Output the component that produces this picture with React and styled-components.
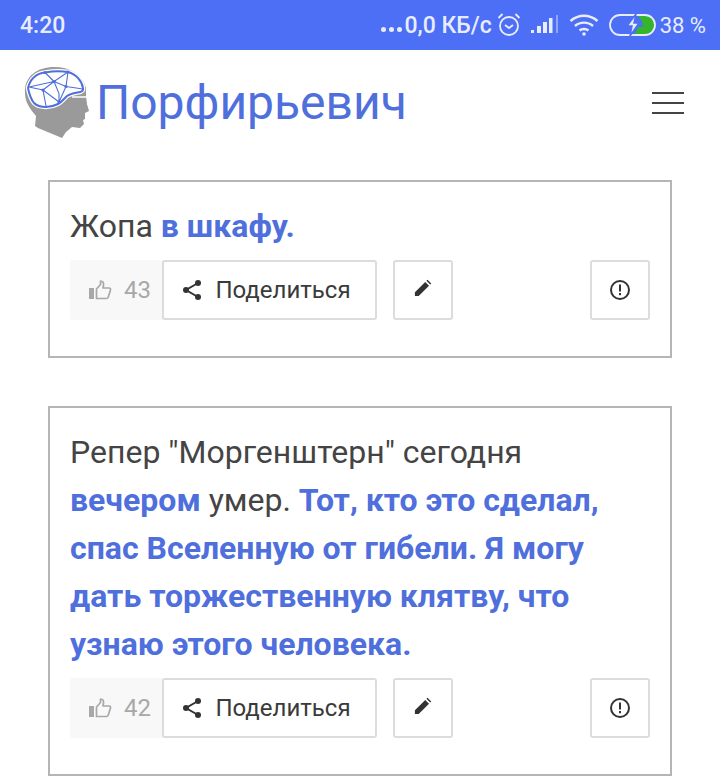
import styled, { createGlobalStyle } from "styled-components";

const Global = createGlobalStyle`
  html, body {
    margin: 0;
    padding: 0;
    background: #fff;
  }
  body {
    font-family: "Roboto", "Liberation Sans", sans-serif;
    width: 720px;
    height: 784px;
    overflow: hidden;
  }
`;

const Page = styled.div`
  width: 720px;
  height: 784px;
  overflow: hidden;
`;

const StatusBar = styled.div`
  height: 50px;
  background: #4d6ff5;
  color: #e8edfe;
  display: flex;
  align-items: center;
  justify-content: space-between;
  padding: 0 14px 0 20px;
  box-sizing: border-box;
`;

const Time = styled.span`
  font-size: 23px;
  font-weight: 500;
`;

const StatusRight = styled.div`
  display: flex;
  align-items: center;
`;

const Dots = styled.span`
  display: flex;
  gap: 3px;
  margin-right: 2px;
  align-self: flex-end;
  padding-bottom: 7px;
  & > i {
    display: block;
    width: 5px;
    height: 5px;
    border-radius: 50%;
    background: #e8edfe;
  }
`;

const Speed = styled.span`
  font-size: 23px;
  font-weight: 500;
  margin-right: 5px;
`;

const Percent = styled.span`
  font-size: 22px;
  margin-left: 4px;
`;

const StatusIcon = styled.svg`
  display: block;
  margin-left: ${(props) => props.$gap || 0}px;
`;

const Header = styled.header`
  height: 105px;
  display: flex;
  align-items: center;
  justify-content: space-between;
  padding: 0 36px 0 22px;
  box-sizing: border-box;
`;

const Brand = styled.div`
  display: flex;
  align-items: center;
`;

const BrandName = styled.span`
  font-size: 48px;
  color: #4f6fdc;
  margin-left: 6px;
`;

const Burger = styled.div`
  width: 32px;
  display: flex;
  flex-direction: column;
  gap: 8px;
  & > i {
    display: block;
    height: 2px;
    background: #444;
  }
`;

const Feed = styled.main`
  padding: 25px 48px 0;
  display: flex;
  flex-direction: column;
  gap: 48px;
`;

const Card = styled.article`
  border: 2px solid #b5b5b5;
  padding: 20px 20px 36px;
`;

const CardText = styled.p`
  margin: 0 0 10px;
  font-size: 32px;
  line-height: 48px;
  color: #444;
`;

const Accent = styled.b`
  color: #4f6fdc;
  font-weight: 700;
`;

const Actions = styled.div`
  display: flex;
  align-items: stretch;
  height: 60px;
`;

const Likes = styled.div`
  width: 94px;
  margin-right: -2px;
  background: #f8f8f8;
  border-radius: 3px 0 0 3px;
  display: flex;
  align-items: center;
  padding-left: 19px;
  box-sizing: border-box;
  color: #a8a8a8;
  font-size: 24px;
  gap: 12px;
`;

const Button = styled.button`
  font-family: inherit;
  background: #fff;
  border: 2px solid #dcdcdc;
  border-radius: 3px;
  color: #3a3a3a;
  font-size: 24px;
  height: 60px;
  padding: 0 ${(props) => props.$endPad || 0}px 0 0;
  width: ${(props) => props.$width}px;
  margin-left: ${(props) => props.$gap || 0}px;
  display: flex;
  align-items: center;
  justify-content: center;
  gap: 13px;
`;

const Spacer = styled.div`
  flex: 1;
`;

const ThumbIcon = () => (
  <svg width="23" height="20" viewBox="0 0 23 20" fill="none">
    <rect x="0" y="8" width="5" height="11" fill="#a8a8a8" />
    <path d="M7.500 9l4-4.500V1c2.500 0 3.300 2 3 4l-.5 3h6c1.200 0 1.800.9 1.500 1.900l-2.300 7.400c-.3.8-.9 1.200-1.600 1.200H7.500z" stroke="#a8a8a8" strokeWidth="1.700" strokeLinejoin="round" />
  </svg>
);

const ShareIcon = () => (
  <svg width="20" height="22" viewBox="0 0 20 22" fill="none">
    <path d="M16 4L4 11l12 7" stroke="#333" strokeWidth="2" />
    <circle cx="16" cy="4" r="3" fill="#333" />
    <circle cx="4" cy="11" r="3" fill="#333" />
    <circle cx="16" cy="18" r="3" fill="#333" />
  </svg>
);

const PencilIcon = () => (
  <svg width="18" height="18" viewBox="0 0 20 20" style={{ marginTop: -4 }}>
    <path d="M1 19v-4.200L12.500 3.300l4.200 4.200L5.200 19z M13.800 2L15 .8l4.200 4.200L18 6.200z" fill="#333" />
  </svg>
);

const AlertIcon = () => (
  <svg width="22" height="22" viewBox="0 0 22 22" fill="none">
    <circle cx="11" cy="11" r="9" stroke="#333" strokeWidth="2" />
    <rect x="10" y="5.500" width="2" height="7" fill="#333" />
    <rect x="10" y="14" width="2" height="2.200" fill="#333" />
  </svg>
);

const brainOutline =
  "M6 22C8 13 15 7 23 6.500c8-1.500 17-1.500 23-.5 8 2 14 9 15 16 .5 2-1 3.500-3 4-5 1-10 1.500-13 4-3 2.500-5 6-9 8-4 2-8 3-12 3-5 0-9-1-12-4C8 32 7 27 6 22z";

const Logo = () => (
  <svg width="68" height="74" viewBox="0 0 68 74">
    <path d="M3 27C2 10 16 1 32 1c16 0 28 7 32 21v8l1 8 2 7-4 2v6l-2 1 1 4-4 4-8-1-6 5-4 6-24-10-3-2 1-10C8 43 3 36 3 27z" fill="#9a9a9a" />
    <path d={brainOutline} fill="#fff" stroke="#fff" strokeWidth="4.500" />
    <path d={brainOutline} fill="#fff" stroke="#4f6fdc" strokeWidth="2" />
    <path d="M23 6.500l9 9M46 6L32 15.500M46 6l-2 14.500M32 15.500l12 5M32 15.500L21 24M7 21l25-5.500M7 21l14 3M21 24l16 12M44 20.500L37 36M44 20.500L61 23M21 24l3 16M32 15.500l5 12v8.500" stroke="#4f6fdc" strokeWidth="1.100" fill="none" />
    <g fill="#4f6fdc">
      <circle cx="23" cy="6.500" r="1.600" />
      <circle cx="46" cy="6" r="1.600" />
      <circle cx="32" cy="15.500" r="1.600" />
      <circle cx="44" cy="20.500" r="1.600" />
      <circle cx="21" cy="24" r="1.600" />
      <circle cx="37" cy="36" r="1.600" />
    </g>
    <path d="M50 31h16v8" stroke="#fff" strokeWidth="1.300" fill="none" />
  </svg>
);

const Alarm = () => (
  <StatusIcon width="24" height="26" viewBox="0 0 24 26" fill="none" stroke="#e8edfe">
    <circle cx="12" cy="14" r="9" strokeWidth="1.800" />
    <path d="M8 13l4 3 4-3M1.500 6l4-4M22.500 6l-4-4" strokeWidth="1.800" />
  </StatusIcon>
);

const Signal = () => (
  <StatusIcon $gap={10} width="28" height="22" viewBox="0 0 28 22">
    <rect x="0" y="16" width="3" height="3" fill="#e8edfe" />
    <rect x="6" y="12" width="4" height="7" fill="#e8edfe" />
    <rect x="12" y="8" width="4" height="11" fill="#e8edfe" />
    <rect x="18" y="4" width="3.500" height="15" fill="#e8edfe" />
    <rect x="25" y="1" width="2" height="18" fill="#8fa5f7" />
  </StatusIcon>
);

const Wifi = () => (
  <StatusIcon $gap={10} width="30" height="24" viewBox="0 0 30 24" fill="none" stroke="#e8edfe" strokeWidth="2.400">
    <path d="M1.500 8c8-7 19-7 27 0M6 13c5-4.500 13-4.500 18 0M10.500 17.500c2.500-2 6.500-2 9 0" />
    <circle cx="15" cy="21" r="1.800" fill="#e8edfe" stroke="none" />
  </StatusIcon>
);

const Battery = () => (
  <StatusIcon $gap={10} width="47" height="24" viewBox="0 0 47 24" fill="none">
    <path d="M29 3h8a9 9 0 0 1 0 18H26l3-7h5l-1-6z" fill="#35b52c" />
    <rect x="1" y="2" width="45" height="20" rx="10" stroke="#e8edfe" strokeWidth="1.800" />
    <path d="M27 1l-9 12h5l-2 10 9-13h-5z" fill="#e8edfe" stroke="#4d6ff5" strokeWidth="1.500" />
  </StatusIcon>
);

const posts = [
  {
    likes: 43,
    text: (
      <>
        Жопа <Accent>в шкафу.</Accent>
      </>
    ),
  },
  {
    likes: 42,
    text: (
      <>
        Репер "Моргенштерн" сегодня <Accent>вечером</Accent> умер.{" "}
        <Accent>
          Тот, кто это сделал, спас Вселенную от гибели. Я могу дать торжественную клятву, что узнаю этого человека.
        </Accent>
      </>
    ),
  },
];

const App = () => (
  <Page>
    <Global />
    <StatusBar>
      <Time>4:20</Time>
      <StatusRight>
        <Dots>
          <i />
          <i />
          <i />
        </Dots>
        <Speed>0,0 КБ/с</Speed>
        <Alarm />
        <Signal />
        <Wifi />
        <Battery />
        <Percent>38 %</Percent>
      </StatusRight>
    </StatusBar>
    <Header>
      <Brand>
        <Logo />
        <BrandName>Порфирьевич</BrandName>
      </Brand>
      <Burger>
        <i />
        <i />
        <i />
      </Burger>
    </Header>
    <Feed>
      {posts.map((post) => (
        <Card key={post.likes}>
          <CardText>{post.text}</CardText>
          <Actions>
            <Likes>
              <ThumbIcon />
              {post.likes}
            </Likes>
            <Button $width={215} $endPad={6}>
              <ShareIcon />
              Поделиться
            </Button>
            <Button $width={60} $gap={16}>
              <PencilIcon />
            </Button>
            <Spacer />
            <Button $width={60}>
              <AlertIcon />
            </Button>
          </Actions>
        </Card>
      ))}
    </Feed>
  </Page>
);

export default App;
